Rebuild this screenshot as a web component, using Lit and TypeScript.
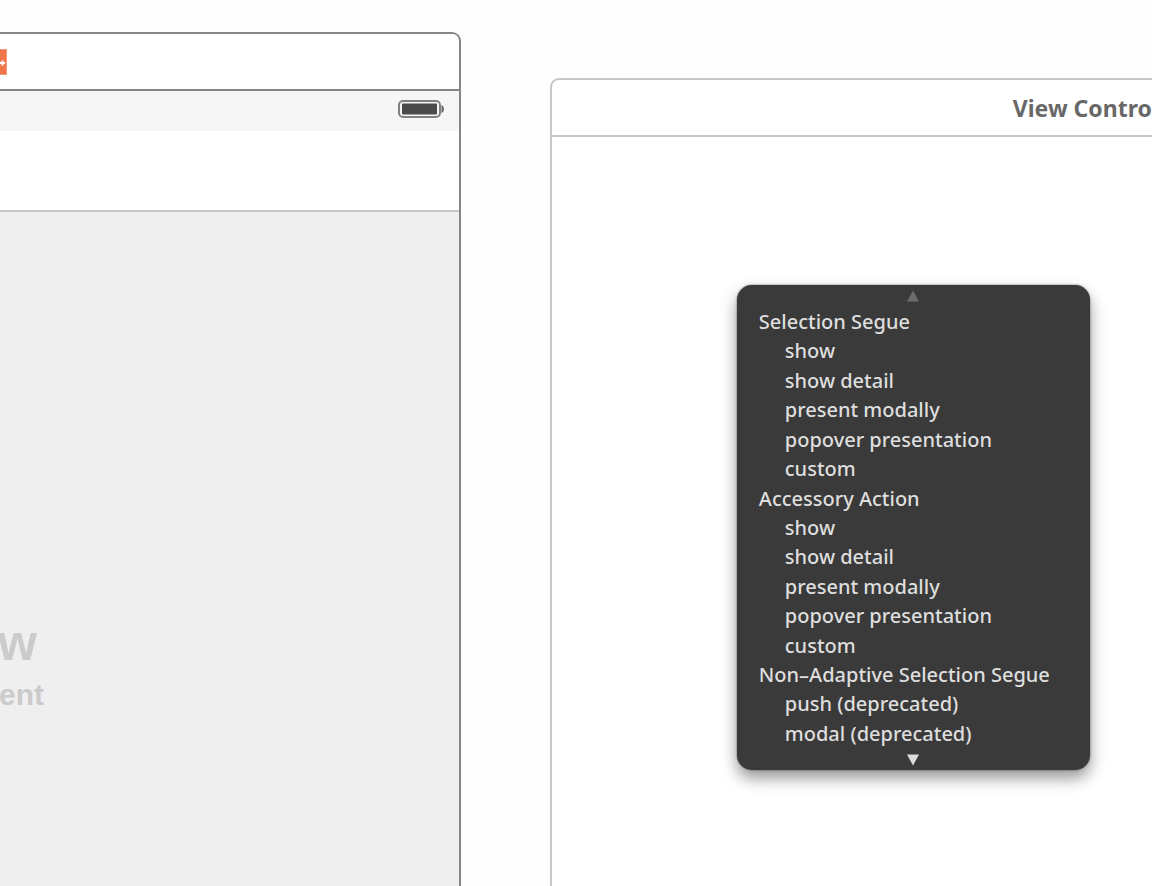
import { LitElement, html, css, svg } from "lit";
import { customElement, property } from "lit/decorators.js";

interface SegueGroup {
  title: string;
  actions: string[];
}

const GROUPS: SegueGroup[] = [
  {
    title: "Selection Segue",
    actions: ["show", "show detail", "present modally", "popover presentation", "custom"],
  },
  {
    title: "Accessory Action",
    actions: ["show", "show detail", "present modally", "popover presentation", "custom"],
  },
  {
    title: "Non\u2013Adaptive Selection Segue",
    actions: ["push (deprecated)", "modal (deprecated)"],
  },
];

@customElement("segue-menu")
export class SegueMenu extends LitElement {
  @property({ attribute: false }) groups: SegueGroup[] = [];

  static styles = css`
    :host {
      display: block;
      box-sizing: border-box;
      width: 353px;
      padding: 5px 22px 4px;
      border-radius: 15px;
      background: #3a3a3a;
      color: #dedede;
      box-shadow: 0 8px 16px rgba(0, 0, 0, 0.42), 0 0 2px rgba(0, 0, 0, 0.6);
      font: 500 20px/29px "Noto Sans", "Open Sans", sans-serif;
    }
    .arrow {
      display: block;
      width: 14px;
      height: 12px;
      margin: 0 auto;
      fill: #dcdcdc;
    }
    .arrow.dim {
      fill: #6c6c6c;
    }
    .list {
      display: flex;
      flex-direction: column;
      justify-content: space-between;
      height: 441px;
      margin: 5px 0 6px;
    }
    .title {
      margin: 0;
      font: inherit;
      white-space: nowrap;
    }
    .action {
      display: block;
      padding: 0 0 0 26px;
      border: 0;
      background: none;
      color: inherit;
      font: inherit;
      text-align: left;
      white-space: nowrap;
    }
  `;

  render() {
    return html`
      <svg class="arrow dim" viewBox="0 0 14 12" aria-hidden="true">
        ${svg`<path d="M7 0.5 L13 11.5 H1 Z" />`}
      </svg>
      <div class="list">
        ${this.groups.map(
          (g) => html`
            <h2 class="title">${g.title}</h2>
            ${g.actions.map((a) => html`<button class="action" type="button">${a}</button>`)}
          `
        )}
      </div>
      <svg class="arrow" viewBox="0 0 14 12" aria-hidden="true">
        ${svg`<path d="M1 0.5 H13 L7 11.5 Z" />`}
      </svg>
    `;
  }
}

@customElement("app-root")
export class AppRoot extends LitElement {
  static styles = css`
    :host {
      display: flex;
      gap: 89px;
      box-sizing: border-box;
      min-height: 100vh;
      padding-top: 32px;
      overflow: hidden;
      background: #fefefe;
      font-family: "Liberation Sans", Arial, sans-serif;
    }
    .table-scene {
      display: flex;
      flex-direction: column;
      flex: 0 0 40%;
      box-sizing: border-box;
      border: solid #858585;
      border-width: 2px 2px 0 0;
      border-radius: 0 9px 0 0;
      overflow: hidden;
    }
    .dock {
      display: flex;
      align-items: center;
      height: 55px;
      border-bottom: 2px solid #858585;
      background: #fff;
    }
    .exit {
      width: 7px;
      height: 26px;
    }
    .status {
      display: flex;
      align-items: center;
      justify-content: flex-end;
      height: 40px;
      padding-right: 15px;
      background: #f6f6f6;
    }
    .battery {
      width: 46px;
      height: 18px;
      margin-bottom: 4px;
    }
    .nav {
      height: 79px;
      border-bottom: 2px solid #c6c6c6;
      background: #fff;
    }
    .content {
      flex: 1;
      padding-top: 403px;
      background: #efefef;
      color: #cbcbcb;
      font-weight: 700;
    }
    .heading,
    .caption {
      display: flex;
      justify-content: flex-end;
      margin: 0;
    }
    .heading {
      width: 37px;
      font-size: 50px;
      line-height: 56px;
    }
    .caption {
      width: 44px;
      font-size: 30px;
      line-height: 48px;
    }
    .view-scene {
      position: relative;
      flex: 1;
      min-width: 0;
      margin-top: 46px;
      border: solid #c8c8c8;
      border-width: 2px 0 0 2px;
      border-radius: 9px 0 0 0;
      background: #fff;
    }
    .bar {
      height: 55px;
      padding-left: 461px;
      border-bottom: 2px solid #c8c8c8;
      overflow: hidden;
      color: #686868;
      font: 700 23px/57px "Noto Sans", "Open Sans", sans-serif;
      white-space: nowrap;
    }
    .popup {
      position: absolute;
      top: 205px;
      left: 185px;
    }
  `;

  render() {
    return html`
      <section class="table-scene">
        <div class="dock">
          <svg class="exit" viewBox="0 0 7 26" aria-hidden="true">
            <rect width="7" height="26" fill="#f0754b" />
            <path d="M6.5 0 V26 M0 0.5 H7 M0 25.5 H7" stroke="#f39a7c" fill="none" />
            <path d="M0 14 H5 M2.5 11.5 V16.5" stroke="#fff" stroke-width="2" />
          </svg>
        </div>
        <div class="status">
          <svg class="battery" viewBox="0 0 46 18" aria-hidden="true">
            <rect x="1" y="1" width="41" height="16" rx="4" fill="#f6f6f6" stroke="#808080" stroke-width="2" />
            <rect x="4" y="3.5" width="35" height="11" rx="1" fill="#4a4a4a" />
            <path d="M43.5 5 Q46 6 46 9 Q46 12 43.5 13 Z" fill="#666" />
          </svg>
        </div>
        <div class="nav"></div>
        <div class="content">
          <p class="heading">w</p>
          <p class="caption">ent</p>
        </div>
      </section>
      <section class="view-scene">
        <div class="bar">View Contro</div>
        <segue-menu class="popup" .groups=${GROUPS}></segue-menu>
      </section>
    `;
  }
}
